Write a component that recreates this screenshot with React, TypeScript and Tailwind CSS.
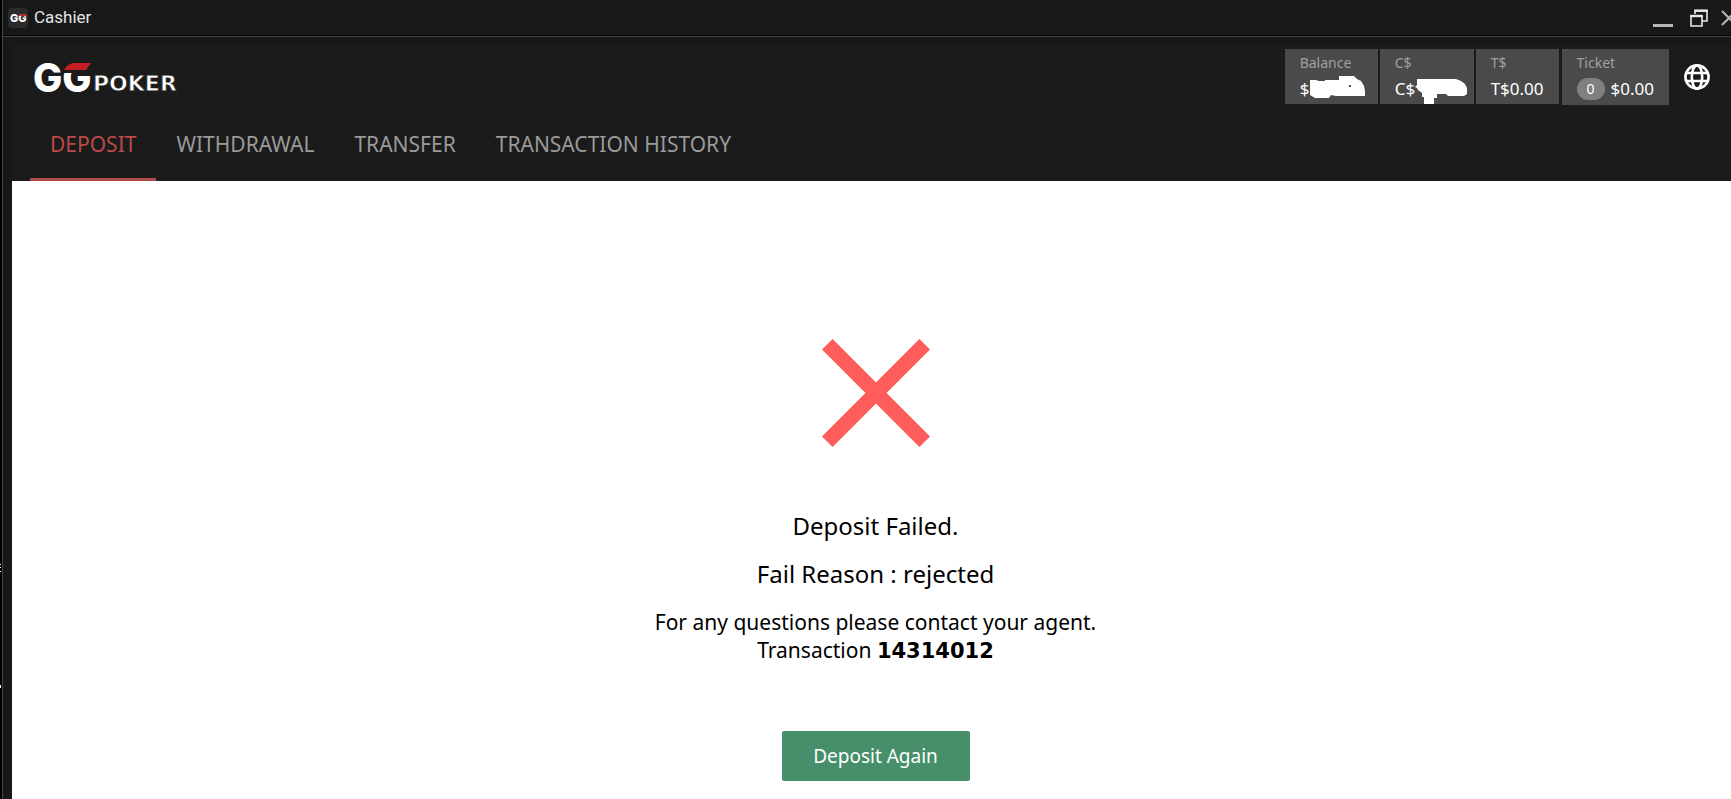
import { useState } from "react";

const tabs = ["DEPOSIT", "WITHDRAWAL", "TRANSFER", "TRANSACTION HISTORY"];

function Logo() {
  return (
    <svg viewBox="-4 -12 156 56" className="h-14 w-[156px]" role="img" aria-label="GGPoker">
      <text x="-2" y="31" fontFamily="Inter" fontWeight="800" fontSize="39" fill="#fff">
        GG
      </text>
      {/* red cap on the second letter */}
      <path d="M27 12 L31 -1 H60 V12 Z" fill="#1b1b1b" />
      <path d="M29 9 C32 4 35 2 40 2 H56 L51 9 Z" fill="#c41e24" />
      <text
        x="58"
        y="30"
        fontFamily="DejaVu Sans"
        fontWeight="bold"
        fontSize="22"
        fill="#fff"
        stroke="#1b1b1b"
        strokeWidth="0.8"
      >
        POKER
      </text>
    </svg>
  );
}

function AppIcon() {
  return (
    <svg viewBox="0 0 20 20" className="size-5" aria-hidden="true">
      <rect width="20" height="20" rx="4" fill="#2b2b2b" />
      <text x="2" y="14" fontFamily="Inter" fontWeight="800" fontSize="11" fill="#fff">
        GG
      </text>
      <path d="M11 8 L13 6 H18 L17 8 Z" fill="#c41e24" />
    </svg>
  );
}

function TitleBar() {
  return (
    <div className="flex h-9 items-center border-b border-black bg-[#181818] pl-[5px]">
      <AppIcon />
      <span className="ml-[6px] font-[Roboto] text-[17px] text-[#e4e4e4]">Cashier</span>
      <div className="ml-auto flex items-center gap-4">
        <button aria-label="Minimize" className="flex h-5 w-5 items-end">
          <span className="mb-px h-[3px] w-full bg-[#b5b5b5]" />
        </button>
        <button aria-label="Restore">
          <svg viewBox="0 0 20 20" className="size-5" fill="none" stroke="#e8e8e8" strokeWidth="1.6">
            <path d="M6 6 V3 H18 V13 H13" />
            <path d="M5.2 2.6 H18.8" strokeWidth="2.4" />
            <path d="M2 8 H13 V18 H2 Z" />
            <path d="M1.2 8 H13.8" strokeWidth="2.4" />
          </svg>
        </button>
        <button aria-label="Close" className="-ml-1 -mr-[6px]">
          <svg viewBox="0 0 16 16" className="size-4" stroke="#b5b5b5" strokeWidth="2">
            <path d="M1 1 L15 15 M15 1 L1 15" />
          </svg>
        </button>
      </div>
    </div>
  );
}

function Balances() {
  return (
    <dl className="flex items-start gap-[2px] text-[17px] leading-5 text-white">
      <div className="h-[55px] w-[93px] bg-[#4a4a4a] px-[15px] pt-1">
        <dt className="mb-[6px] text-sm leading-5 text-[#a0a0a0]">Balance</dt>
        <dd className="relative">
          $
          <svg viewBox="0 0 56 24" className="absolute -top-1 left-[10px] h-6 w-14" fill="#fff" aria-hidden="true">
            <path d="M0 5 H6 L9 6 H15 V5 H29 V1 H44 L47 4 L51 6 L54 11 L55 16 V21 H26 L21 20 L19 23 H5 L0 20 Z" />
            <path d="M39 10 h2 v2 h-2 Z" fill="#4a4a4a" />
          </svg>
        </dd>
      </div>
      <div className="h-[55px] w-[94px] bg-[#4a4a4a] px-[15px] pt-1">
        <dt className="mb-[6px] text-sm leading-5 text-[#a0a0a0]">C$</dt>
        <dd className="relative">
          C$
          <svg viewBox="0 0 54 26" className="absolute -top-px left-[20px] h-[26px] w-[54px]" fill="#fff" aria-hidden="true">
            <path d="M2 1 H41 L46 3 L50 6 L52 10 V16 L49 18 H33 L31 16 H22 V20 H19 V26 H9 V19 H7 V15 L3 12 L2 10 L0 9 L2 7 Z" />
          </svg>
        </dd>
      </div>
      <div className="h-[55px] bg-[#4a4a4a] px-[15px] pt-1">
        <dt className="mb-[6px] text-sm leading-5 text-[#a0a0a0]">T$</dt>
        <dd>T$0.00</dd>
      </div>
      <div className="ml-px h-14 bg-[#4a4a4a] px-[15px] pt-1">
        <dt className="mb-[5px] text-sm leading-5 text-[#a0a0a0]">Ticket</dt>
        <dd className="flex items-center gap-[6px]">
          <span className="h-[22px] w-7 rounded-full bg-[#808080] text-center text-sm leading-[22px]">0</span>
          $0.00
        </dd>
      </div>
    </dl>
  );
}

function GlobeIcon() {
  return (
    <svg viewBox="0 0 26 26" className="size-[26px]" fill="none" stroke="#fff" strokeWidth="2.6" aria-hidden="true">
      <circle cx="13" cy="13" r="11.6" />
      <ellipse cx="13" cy="13" rx="5.2" ry="11.6" />
      <path d="M2.5 9 H23.5 M2.5 17 H23.5" />
    </svg>
  );
}

export default function App() {
  const [active, setActive] = useState("DEPOSIT");

  return (
    <div className="relative flex min-h-screen overflow-hidden bg-black font-['Noto_Sans',sans-serif]">
      {/* bits of the window behind */}
      <div className="absolute left-0 top-[564px] h-px w-px bg-white" />
      <div className="absolute left-0 top-[567px] h-px w-px bg-white" />
      <div className="absolute left-0 top-[571px] h-px w-px bg-white" />
      <div className="absolute left-0 top-[685px] h-[3px] w-px bg-white" />

      <div className="ml-[2px] flex w-full flex-col border-l border-[#444] bg-[#181818]">
        <TitleBar />

        <div className="flex grow flex-col border-t border-[#444] pl-[9px] pt-2">
          <div className="-mr-2 flex grow flex-col">
            <header className="bg-[#1b1b1b]">
              <div className="flex h-[70px] items-start pl-[19px] pr-[29px] pt-1">
                <Logo />
                <div className="ml-auto">
                  <Balances />
                </div>
                <button aria-label="Language" className="ml-[15px] mt-[15px]">
                  <GlobeIcon />
                </button>
              </div>

              <nav className="flex pl-[18px]">
                {tabs.map((tab) => (
                  <button
                    key={tab}
                    onClick={() => setActive(tab)}
                    className={`h-[66px] border-b-[3px] px-5 pb-1 text-[21px] ${
                      active === tab ? "border-[#b04a4a] text-[#b94a48]" : "border-transparent text-[#9a9a9a]"
                    }`}
                  >
                    {tab}
                  </button>
                ))}
              </nav>
            </header>

            <main className="flex grow flex-col items-center bg-white pt-[158px] text-black">
              <svg viewBox="0 0 108 108" className="size-[108px]" stroke="#ff5c5c" strokeWidth="15" aria-hidden="true">
                <path d="M5.3 5.3 L102.7 102.7 M102.7 5.3 L5.3 102.7" />
              </svg>
              <h1 className="mt-[61px] text-2xl leading-9">Deposit Failed.</h1>
              <p className="mt-3 text-2xl leading-9">Fail Reason : rejected</p>
              <p className="mt-4 text-center text-[21px] leading-7">
                For any questions please contact your agent.
                <br />
                Transaction <strong className="font-['DejaVu_Sans']">14314012</strong>
              </p>
              <button className="mt-[66px] h-[50px] w-[188px] rounded-[2px] bg-[#468f6a] text-[19px] text-white">
                Deposit Again
              </button>
            </main>
          </div>
        </div>
      </div>
    </div>
  );
}
